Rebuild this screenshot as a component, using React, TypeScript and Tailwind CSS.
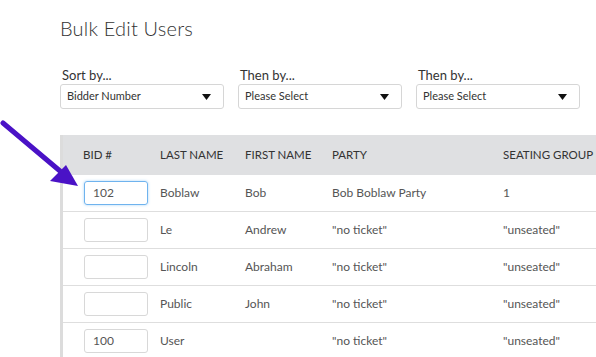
type Row = { bid: string; last: string; first: string; party: string; seat: string; focused?: boolean };

const rows: Row[] = [
  { bid: "102", last: "Boblaw", first: "Bob", party: "Bob Boblaw Party", seat: "1", focused: true },
  { bid: "", last: "Le", first: "Andrew", party: "\"no ticket\"", seat: "\"unseated\"" },
  { bid: "", last: "Lincoln", first: "Abraham", party: "\"no ticket\"", seat: "\"unseated\"" },
  { bid: "", last: "Public", first: "John", party: "\"no ticket\"", seat: "\"unseated\"" },
  { bid: "100", last: "User", first: "", party: "\"no ticket\"", seat: "\"unseated\"" },
];

function SortSelect({ label, value }: { label: string; value: string }) {
  return (
    <div className="flex flex-col">
      <div className="text-[13px] leading-[16px] text-[#333] pl-[2px] mb-[1px]">{label}</div>
      <div className="h-[25px] w-[164px] flex items-center justify-between border border-[#d6d6d6] rounded-[3px] pl-[6px] pr-[12px] text-[11px] text-[#333]">
        <span>{value}</span>
        {/* solid caret */}
        <svg width="9" height="6" viewBox="0 0 9 6">
          <path d="M0 0h9L4.5 6z" fill="#111" />
        </svg>
      </div>
    </div>
  );
}

export default function App() {
  return (
    <div
      className="relative w-[596px] h-[357px] overflow-hidden bg-white"
      style={{ fontFamily: "Lato, 'Noto Sans', sans-serif" }}
    >
      <div className="pl-[60px] pt-[16px]">
        <h1 className="text-[20px] leading-[24px] font-light text-[#333] tracking-[0.2px]">Bulk Edit Users</h1>
        <div className="flex gap-[14px] mt-[27px]">
          <SortSelect label="Sort by..." value="Bidder Number" />
          <SortSelect label="Then by..." value="Please Select" />
          <SortSelect label="Then by..." value="Please Select" />
        </div>
        <div className="mt-[26px] border-l-[3px] border-[#dcdcdc] w-[700px]">
          <div className="h-[40px] bg-[#dfe0e2] flex items-center text-[11.5px] text-[#333]">
            <div className="w-[97px] pl-[20px]">BID #</div>
            <div className="w-[85px]">LAST NAME</div>
            <div className="w-[87px]">FIRST NAME</div>
            <div className="w-[171px]">PARTY</div>
            <div>SEATING GROUP</div>
          </div>
          {rows.map((r, i) => (
            <div key={i} className="h-[37px] border-b border-[#dedede] flex items-center text-[12px] text-[#555]">
              <div className="w-[97px] pl-[21px]">
                <div
                  className={
                    "w-[64px] h-[24px] rounded-[3px] flex items-center pl-[8px] text-[12px] text-[#555] " +
                    (r.focused
                      ? "border border-[#6fb3ee] shadow-[0_0_3px_#a9d3f5]"
                      : "border border-[#d8d8d8]")
                  }
                >
                  {r.bid}
                </div>
              </div>
              <div className="w-[85px]">{r.last}</div>
              <div className="w-[87px]">{r.first}</div>
              <div className="w-[171px]">{r.party}</div>
              <div>{r.seat}</div>
            </div>
          ))}
        </div>
      </div>
      <svg className="absolute left-0 top-0" width="90" height="200" viewBox="0 0 90 200">
        <line x1="3" y1="123" x2="60" y2="171" stroke="#4a12c6" strokeWidth="5" strokeLinecap="round" />
        <path d="M50 181 L66 165 L78 186 Z" fill="#4a12c6" />
      </svg>
    </div>
  );
}
